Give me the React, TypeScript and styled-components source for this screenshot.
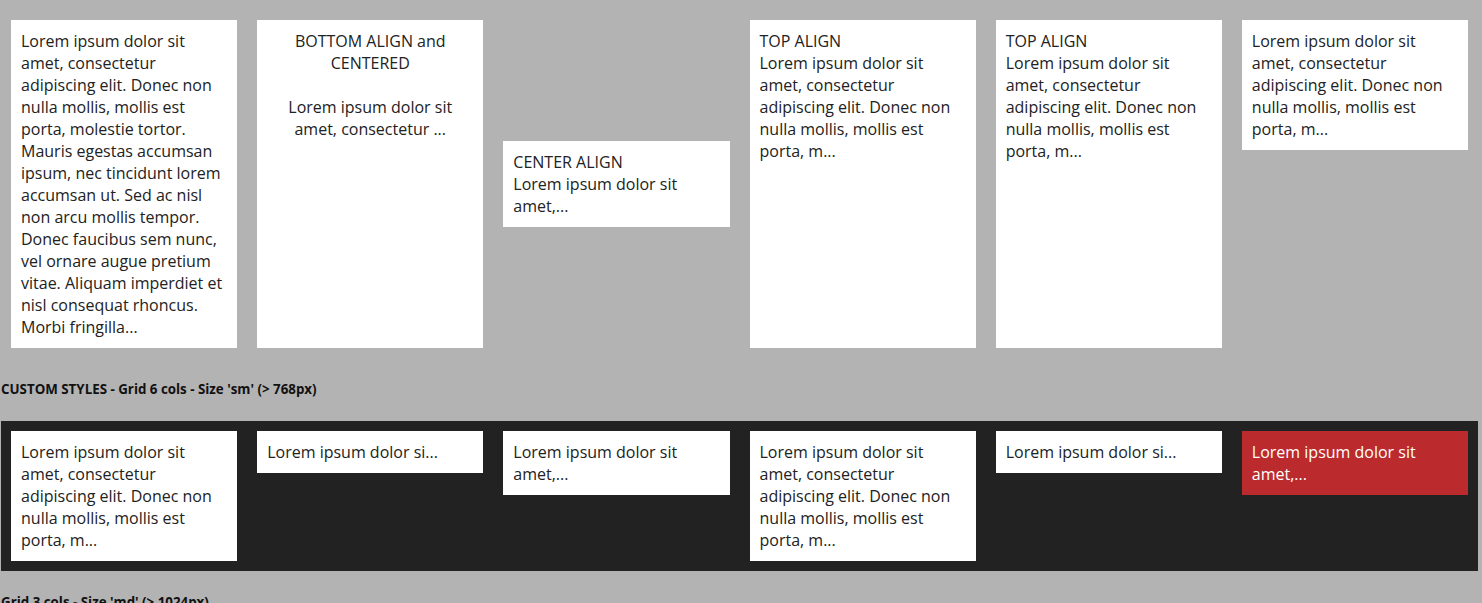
import styled, { createGlobalStyle } from 'styled-components';

const GlobalStyle = createGlobalStyle`
  body {
    margin: 0;
    background: #b3b3b3;
    font-family: 'Open Sans', 'Liberation Sans', sans-serif;
    color: #222222;
  }
`;

type Align = 'start' | 'center' | 'end' | 'stretch';

interface CardData {
  title?: string;
  text: string;
  align?: Align;
  centered?: boolean;
  gapAfterTitle?: boolean;
  tone?: 'light' | 'red';
}

const LONG =
  'Lorem ipsum dolor sit amet, consectetur adipiscing elit. Donec non nulla mollis, mollis est porta, molestie tortor. Mauris egestas accumsan ipsum, nec tincidunt lorem accumsan ut. Sed ac nisl non arcu mollis tempor. Donec faucibus sem nunc, vel ornare augue pretium vitae. Aliquam imperdiet et nisl consequat rhoncus. Morbi fringilla...';
const MEDIUM =
  'Lorem ipsum dolor sit amet, consectetur adipiscing elit. Donec non nulla mollis, mollis est porta, m...';
const SHORT = 'Lorem ipsum dolor sit amet,...';
const TINY = 'Lorem ipsum dolor si...';

const alignmentCards: CardData[] = [
  { text: LONG, align: 'stretch' },
  {
    title: 'BOTTOM ALIGN and CENTERED',
    text: 'Lorem ipsum dolor sit amet, consectetur ...',
    align: 'stretch',
    centered: true,
    gapAfterTitle: true,
  },
  { title: 'CENTER ALIGN', text: SHORT, align: 'center' },
  { title: 'TOP ALIGN', text: MEDIUM, align: 'stretch' },
  { title: 'TOP ALIGN', text: MEDIUM, align: 'stretch' },
  { text: MEDIUM, align: 'start' },
];

const customCards: CardData[] = [
  { text: MEDIUM },
  { text: TINY },
  { text: SHORT },
  { text: MEDIUM },
  { text: TINY },
  { text: SHORT, tone: 'red' },
];

const Grid = ({ cards, dark }: { cards: CardData[]; dark?: boolean }) => (
  <GridWrapper dark={dark}>
    {cards.map((card, i) => (
      <Card
        key={i}
        align={card.align ?? 'start'}
        centered={card.centered}
        tone={card.tone ?? 'light'}
      >
        {card.title && <Title spaced={card.gapAfterTitle}>{card.title}</Title>}
        {card.text}
      </Card>
    ))}
  </GridWrapper>
);

export default function App() {
  return (
    <>
      <GlobalStyle />
      <Page>
        <Grid cards={alignmentCards} />
        <SectionTitle>CUSTOM STYLES - Grid 6 cols - Size 'sm' (&gt; 768px)</SectionTitle>
        <Grid cards={customCards} dark />
        <SectionTitle>Grid 3 cols - Size 'md' (&gt; 1024px)</SectionTitle>
        <Grid cards={customCards.slice(0, 3)} />
      </Page>
    </>
  );
}

const Page = styled.div`
  padding: 10px 4px 0 1px;
`;

const GridWrapper = styled.div<{ dark?: boolean }>`
  display: grid;
  grid-template-columns: repeat(6, 1fr);
  gap: 20px;
  padding: 10px;
  background: ${(props) => (props.dark ? '#222222' : 'transparent')};
`;

const Card = styled.div<{ align: Align; centered?: boolean; tone: 'light' | 'red' }>`
  align-self: ${(props) => props.align};
  background: ${(props) => (props.tone === 'red' ? '#bb2a2c' : '#ffffff')};
  color: ${(props) => (props.tone === 'red' ? '#ffffff' : '#222222')};
  text-align: ${(props) => (props.centered ? 'center' : 'left')};
  padding: 10px;
  font-size: 16px;
  line-height: 22px;
`;

const Title = styled.div<{ spaced?: boolean }>`
  margin-bottom: ${(props) => (props.spaced ? '22px' : '0')};
`;

const SectionTitle = styled.div`
  font-size: 13.33px;
  font-weight: 700;
  line-height: 17px;
  color: #111111;
  padding: 23px 0 23px;
`;
